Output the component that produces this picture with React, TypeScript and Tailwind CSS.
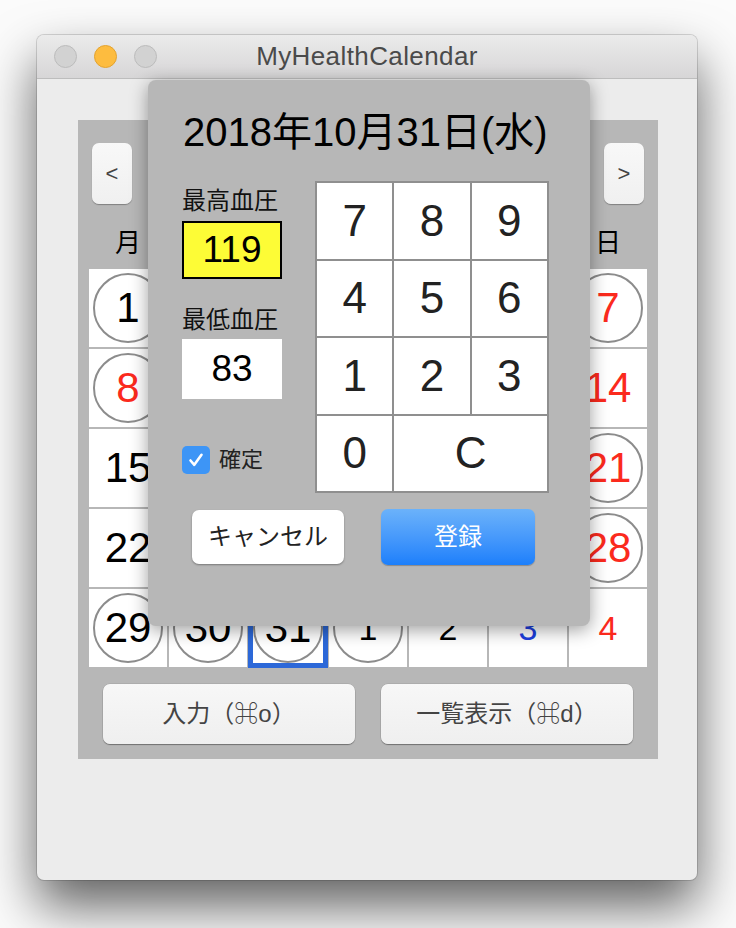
import React from 'react';

type Day = { n: number; circle?: boolean; color?: 'red' | 'blue'; next?: boolean; today?: boolean };

const weeks: Day[][] = [
    [{ n: 1, circle: true }, { n: 2 }, { n: 3 }, { n: 4 }, { n: 5 }, { n: 6, color: 'blue' }, { n: 7, circle: true, color: 'red' }],
    [{ n: 8, circle: true, color: 'red' }, { n: 9 }, { n: 10 }, { n: 11 }, { n: 12 }, { n: 13, color: 'blue' }, { n: 14, color: 'red' }],
    [{ n: 15 }, { n: 16 }, { n: 17 }, { n: 18 }, { n: 19 }, { n: 20, color: 'blue' }, { n: 21, circle: true, color: 'red' }],
    [{ n: 22 }, { n: 23 }, { n: 24 }, { n: 25 }, { n: 26 }, { n: 27, color: 'blue' }, { n: 28, circle: true, color: 'red' }],
    [
        { n: 29, circle: true },
        { n: 30, circle: true },
        { n: 31, circle: true, today: true },
        { n: 1, circle: true, next: true },
        { n: 2, next: true },
        { n: 3, next: true, color: 'blue' },
        { n: 4, next: true, color: 'red' },
    ],
];

const weekdays = ['月', '火', '水', '木', '金', '土', '日'];
const keys = ['7', '8', '9', '4', '5', '6', '1', '2', '3', '0', 'C'];

function DayCell({ d }: { d: Day }) {
    const color = d.color === 'red' ? 'text-[#fb2a1d]' : d.color === 'blue' ? 'text-[#1d3fe0]' : 'text-black';
    const size = d.next ? 'text-[34px]' : 'text-[42px]';
    return (
        <div className={`bg-white h-[78px] flex items-center justify-center ${d.today ? 'border-4 border-[#2c68d8] ring-1 ring-[#2c68d8]' : ''}`}>
            <div
                className={`w-[70px] h-[70px] shrink-0 rounded-full flex items-center justify-center leading-none ${
                    d.circle ? 'border-2 border-[#8c8c8c]' : ''
                } ${color} ${size}`}
            >
                {d.n}
            </div>
        </div>
    );
}

export default function App() {
    return (
        <div className="w-[736px] h-[928px] bg-[#fbfbfb] pt-[35px] pl-[37px] font-[family-name:'Liberation_Sans','Noto_Sans_CJK_JP','DejaVu_Sans',sans-serif]">
            {/* ウィンドウ */}
            <div className="relative w-[660px] h-[845px] rounded-[7px] bg-[#ececec] overflow-hidden flex flex-col shadow-[0_26px_52px_rgba(0,0,0,0.62),0_0_0_1px_rgba(0,0,0,0.14)]">
                {/* タイトルバー */}
                <div className="h-[44px] shrink-0 grid grid-cols-[1fr_auto_1fr] items-center border-b border-[#bdbdbd] bg-gradient-to-b from-[#ebebeb] to-[#d7d6d7]">
                    <div className="flex items-center gap-[17px] pl-[17px]">
                        <div className="w-[23px] h-[23px] rounded-full bg-[#d2d2d2] border border-[#bcbcbc]" />
                        <div className="w-[23px] h-[23px] rounded-full bg-[#fdbc3f] border border-[#e3a330]" />
                        <div className="w-[23px] h-[23px] rounded-full bg-[#d2d2d2] border border-[#bcbcbc]" />
                    </div>
                    <span className="text-[26px] tracking-[0.4px] text-[#4a4a4a]">MyHealthCalendar</span>
                    <div />
                </div>

                {/* カレンダー */}
                <div className="pt-[41px] pl-[41px]">
                    <div className="w-[580px] h-[639px] bg-[#b7b7b7] flex flex-col">
                        <div className="mt-[23px] px-[14px] flex items-center justify-between">
                            <button className="w-[40px] h-[61px] rounded-[7px] bg-gradient-to-b from-[#f8f8f8] to-[#f0f0f0] shadow-[0_1px_1px_rgba(0,0,0,0.3)] text-[22px] text-[#444]">
                                &lt;
                            </button>
                            <span className="text-[30px] text-black">2018年10月</span>
                            <button className="w-[40px] h-[61px] rounded-[7px] bg-gradient-to-b from-[#f8f8f8] to-[#f0f0f0] shadow-[0_1px_1px_rgba(0,0,0,0.3)] text-[22px] text-[#444]">
                                &gt;
                            </button>
                        </div>

                        <div className="mt-[26px] ml-[11px] w-[558px] grid grid-cols-7 gap-[2px]">
                            {weekdays.map((w) => (
                                <div key={w} className="h-[26px] leading-[26px] text-center text-[26px] text-black">
                                    {w}
                                </div>
                            ))}
                        </div>

                        <div className="mt-[13px] ml-[11px] w-[558px] grid grid-cols-7 gap-[2px]">
                            {weeks.flat().map((d, i) => (
                                <DayCell key={i} d={d} />
                            ))}
                        </div>

                        <div className="mt-[17px] pl-[25px] flex gap-[26px]">
                            <button className="w-[252px] h-[60px] rounded-[7px] bg-gradient-to-b from-[#f7f7f7] to-[#efefef] shadow-[0_1px_1px_rgba(0,0,0,0.35),0_0_0_0.5px_rgba(0,0,0,0.12)] text-[24px] text-[#444]">
                                入力（⌘o）
                            </button>
                            <button className="w-[252px] h-[60px] rounded-[7px] bg-gradient-to-b from-[#f7f7f7] to-[#efefef] shadow-[0_1px_1px_rgba(0,0,0,0.35),0_0_0_0.5px_rgba(0,0,0,0.12)] text-[24px] text-[#444]">
                                一覧表示（⌘d）
                            </button>
                        </div>
                    </div>
                </div>

                {/* 入力シート */}
                <div className="absolute left-[111px] top-[45px] w-[442px] h-[546px] rounded-[8px] bg-[#b7b7b7] shadow-[0_4px_18px_rgba(0,0,0,0.38)] flex flex-col">
                    <h1 className="pt-[32px] pl-[35px] text-[40px] leading-[40px] text-black">2018年10月31日(水)</h1>

                    <div className="mt-[29px] pl-[34px] flex gap-[33px]">
                        <div className="w-[100px] flex flex-col">
                            <span className="mt-[7px] text-[24px] leading-[26px] text-[#111] whitespace-nowrap">最高血圧</span>
                            <div className="mt-[7px] h-[58px] border-2 border-black bg-[#fdfc36] flex items-center justify-center text-[37px] text-black">
                                119
                            </div>
                            <span className="mt-[28px] text-[24px] leading-[26px] text-[#111] whitespace-nowrap">最低血圧</span>
                            <div className="mt-[6px] h-[60px] bg-white flex items-center justify-center text-[37px] text-black">83</div>
                            <label className="mt-[44px] flex items-center gap-[9px]">
                                <span className="w-[28px] h-[28px] rounded-[5px] bg-[#3d95f6] flex items-center justify-center">
                                    <svg width="20" height="20" viewBox="0 0 20 20" fill="none">
                                        <path d="M4.5 10.5 L8.3 14.8 L15.5 4.8" stroke="white" strokeWidth="2.6" strokeLinecap="round" strokeLinejoin="round" />
                                    </svg>
                                </span>
                                <span className="text-[22px] text-[#222]">確定</span>
                            </label>
                        </div>

                        <div className="w-[234px] h-[312px] bg-[#8f8f8f] p-[2px] grid grid-cols-3 grid-rows-4 gap-[2px]">
                            {keys.map((k) => (
                                <div
                                    key={k}
                                    className={`bg-white flex items-center justify-center text-[44px] text-[#222] ${k === 'C' ? 'col-span-2' : ''}`}
                                >
                                    {k}
                                </div>
                            ))}
                        </div>
                    </div>

                    <div className="mt-[16px] pl-[44px] flex items-center gap-[37px]">
                        <button className="w-[152px] h-[54px] rounded-[7px] bg-white shadow-[0_1px_2px_rgba(0,0,0,0.35)] text-[24px] text-[#222]">
                            キャンセル
                        </button>
                        <button className="w-[154px] h-[56px] rounded-[7px] bg-gradient-to-b from-[#6bb2fa] to-[#1b7ffb] shadow-[0_1px_1px_rgba(0,0,0,0.25)] text-[24px] text-white">
                            登録
                        </button>
                    </div>
                </div>
            </div>
        </div>
    );
}
